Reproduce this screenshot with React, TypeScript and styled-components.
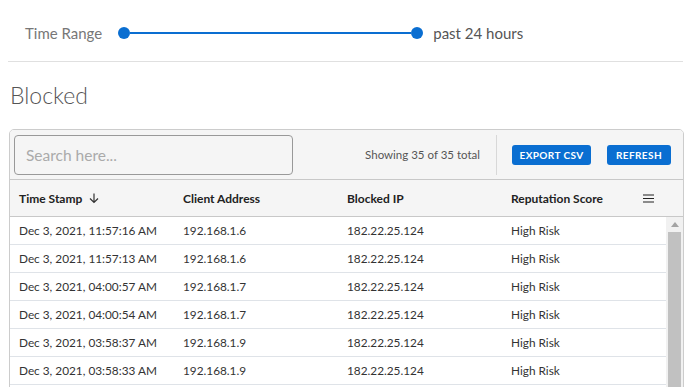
import styled, { createGlobalStyle } from 'styled-components'

const GlobalStyle = createGlobalStyle`
    html, body {
        margin: 0;
        padding: 0;
        height: 387px;
        overflow: hidden;
        background: #fff;
        font-family: Lato, "Liberation Sans", sans-serif;
    }
`

const colors = {
    blue: '#0a6ed1',
    text: '#333',
    line: '#dfe3e8',
    panel: '#f5f5f5',
}

const rows = [
    ['Dec 3, 2021, 11:57:16 AM', '192.168.1.6'],
    ['Dec 3, 2021, 11:57:13 AM', '192.168.1.6'],
    ['Dec 3, 2021, 04:00:57 AM', '192.168.1.7'],
    ['Dec 3, 2021, 04:00:54 AM', '192.168.1.7'],
    ['Dec 3, 2021, 03:58:37 AM', '192.168.1.9'],
    ['Dec 3, 2021, 03:58:33 AM', '192.168.1.9'],
]

const Page = styled.div`
    padding: 0 8px;
`

const RangeRow = styled.div`
    display: flex;
    align-items: center;
    height: 62px;
    padding: 4px 0 0 17px;
    border-bottom: 1px solid #e0e0e0;
    box-sizing: border-box;
`

const RangeLabel = styled.span`
    font-size: 15px;
    color: #777;
    margin-right: 16px;
`

const Slider = styled.div`
    display: flex;
    align-items: center;
    width: 305px;
`

const Thumb = styled.span`
    width: 12px;
    height: 12px;
    border-radius: 50%;
    background: ${colors.blue};
    flex: none;
`

const Track = styled.span`
    flex: 1;
    height: 2px;
    background: ${colors.blue};
`

const RangeValue = styled.span`
    font-size: 15px;
    color: #555;
    margin-left: 10px;
`

const Heading = styled.h2`
    margin: 19px 0 0 2px;
    height: 48px;
    font-size: 23px;
    font-weight: 300;
    color: #555;
`

const Card = styled.div`
    box-sizing: border-box;
    margin-left: 1px;
    width: 675px;
    border: 1px solid #ccc;
    border-radius: 5px;
    overflow: hidden;
    height: 300px;
`

const Toolbar = styled.div`
    display: flex;
    align-items: center;
    height: 49px;
    padding: 0 12px 0 4px;
    background: ${colors.panel};
    border-bottom: 1px solid #c8c8c8;
`

const Search = styled.input`
    box-sizing: border-box;
    width: 279px;
    height: 40px;
    border: 1px solid #999;
    border-radius: 4px;
    padding: 0 11px;
    font-family: inherit;
    font-size: 15.5px;
    background: ${colors.panel};
    color: ${colors.text};
    &::placeholder {
        color: #aaa;
    }
`

const Count = styled.span`
    margin-left: auto;
    font-size: 11.5px;
    color: #555;
    padding-right: 16px;
`

const Separator = styled.span`
    width: 1px;
    height: 40px;
    background: #d8d8d8;
    margin-right: 15px;
`

const Button = styled.button<{ $width: number; $gap?: boolean }>`
    width: ${(p) => p.$width}px;
    height: 20px;
    padding: 0;
    margin-left: ${(p) => (p.$gap ? '16px' : '0')};
    border: none;
    border-radius: 3px;
    background: ${colors.blue};
    color: #fff;
    font-family: inherit;
    font-size: 10px;
    font-weight: 700;
    letter-spacing: 0.4px;
`

const HeaderRow = styled.div`
    display: grid;
    grid-template-columns: repeat(3, 164px) 1fr;
    align-items: center;
    height: 36px;
    background: ${colors.panel};
    border-bottom: 1px solid #c8c8c8;
`

const HeadCell = styled.div<{ $menu?: boolean }>`
    padding: 0 ${(p) => (p.$menu ? '29px' : '0')} 0 9px;
    font-size: 12px;
    font-weight: 700;
    color: #222;
    display: flex;
    align-items: center;
    justify-content: ${(p) => (p.$menu ? 'space-between' : 'flex-start')};
    gap: 6px;
`

const Body = styled.div`
    display: flex;
`

const Rows = styled.div`
    flex: 1;
`

const Row = styled.div`
    display: grid;
    grid-template-columns: repeat(4, 164px);
    align-items: center;
    height: 27px;
    border-bottom: 1px solid ${colors.line};
`

const Cell = styled.div`
    padding-left: 9px;
    font-size: 11.8px;
    color: ${colors.text};
`

const ScrollBar = styled.div`
    width: 17px;
    background: #f1f1f1;
    display: flex;
    flex-direction: column;
    align-items: center;
`

const ScrollArrow = styled.div`
    height: 15px;
    display: flex;
    align-items: center;
    justify-content: center;
`

const ScrollThumb = styled.div`
    width: 13px;
    height: 200px;
    background: #c1c1c1;
`

export default function App() {
    return (
        <Page>
            <GlobalStyle />
            <RangeRow>
                <RangeLabel>Time Range</RangeLabel>
                <Slider>
                    <Thumb />
                    <Track />
                    <Thumb />
                </Slider>
                <RangeValue>past 24 hours</RangeValue>
            </RangeRow>
            <Heading>Blocked</Heading>
            <Card>
                <Toolbar>
                    <Search placeholder="Search here..." />
                    <Count>Showing 35 of 35 total</Count>
                    <Separator />
                    <Button $width={79}>EXPORT CSV</Button>
                    <Button $width={64} $gap>REFRESH</Button>
                </Toolbar>
                <HeaderRow>
                    <HeadCell>
                        Time Stamp
                        <svg width="12" height="12" viewBox="0 0 12 12" fill="none" stroke="#333" strokeWidth="1.2">
                            <path d="M6 1.5v9M2 6.5l4 4 4-4" />
                        </svg>
                    </HeadCell>
                    <HeadCell>Client Address</HeadCell>
                    <HeadCell>Blocked IP</HeadCell>
                    <HeadCell $menu>
                        Reputation Score
                        <svg width="11" height="9" viewBox="0 0 11 9" stroke="#222" strokeWidth="1.2">
                            <path d="M0 1h11M0 4.5h11M0 8h11" />
                        </svg>
                    </HeadCell>
                </HeaderRow>
                <Body>
                    <Rows>
                        {rows.map(([time, client]) => (
                            <Row key={time}>
                                <Cell>{time}</Cell>
                                <Cell>{client}</Cell>
                                <Cell>182.22.25.124</Cell>
                                <Cell>High Risk</Cell>
                            </Row>
                        ))}
                    </Rows>
                    <ScrollBar>
                        <ScrollArrow>
                            <svg width="8" height="5" viewBox="0 0 8 5">
                                <path d="M0 5L4 0L8 5Z" fill="#a3a3a3" />
                            </svg>
                        </ScrollArrow>
                        <ScrollThumb />
                    </ScrollBar>
                </Body>
            </Card>
        </Page>
    )
}
